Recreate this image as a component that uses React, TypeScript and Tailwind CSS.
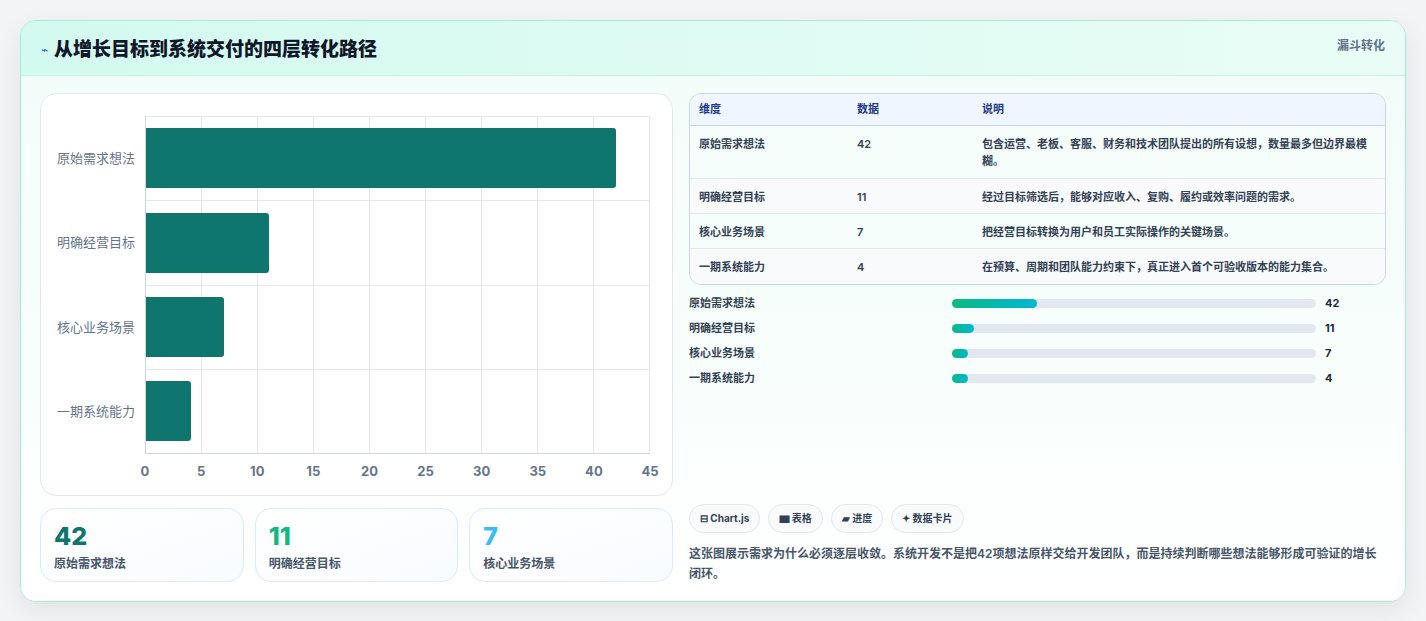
const rows = [
  { name: "原始需求想法", value: 42, desc: "包含运营、老板、客服、财务和技术团队提出的所有设想，数量最多但边界最模糊。", bar: "23.3%" },
  { name: "明确经营目标", value: 11, desc: "经过目标筛选后，能够对应收入、复购、履约或效率问题的需求。", bar: "6.1%" },
  { name: "核心业务场景", value: 7, desc: "把经营目标转换为用户和员工实际操作的关键场景。", bar: "4.4%" },
  { name: "一期系统能力", value: 4, desc: "在预算、周期和团队能力约束下，真正进入首个可验收版本的能力集合。", bar: "4.4%" },
];

const ticks = [0, 5, 10, 15, 20, 25, 30, 35, 40, 45];

function BarChart() {
  return (
    <div className="h-[403px] rounded-2xl border border-[#e2e8f0] bg-white pl-[14px] pr-[22px] pt-[22px]">
      <div className="flex">
        <div className="flex w-[90px] flex-col">
          {rows.map((r) => (
            <div key={r.name} className="flex h-[84.5px] items-center justify-end pr-[10px] text-[13px] text-[#64748b]">
              {r.name}
            </div>
          ))}
        </div>
        <div className="relative h-[338px] flex-1 border-b border-l border-[#cbd5e1]">
          <div className="absolute inset-0 flex">
            {ticks.slice(1).map((t) => (
              <div key={t} className="flex-1 border-r border-t border-[#e5e7eb]" />
            ))}
          </div>
          <div className="absolute inset-0 flex flex-col">
            {rows.map((r, i) => (
              <div key={r.name} className={`flex h-[84.5px] items-center ${i > 0 ? "border-t border-[#e5e7eb]" : ""}`}>
                <div className="h-[60px] rounded-r-[3px] bg-[#0f766e]" style={{ width: `${(r.value / 45) * 100}%` }} />
              </div>
            ))}
          </div>
        </div>
      </div>
      <div className="relative ml-[90px] mt-[8px] h-[20px]">
        {ticks.map((t) => (
          <span
            key={t}
            className="absolute -translate-x-1/2 text-[13px] font-bold text-[#64748b]"
            style={{ left: `${(t / 45) * 100}%` }}
          >
            {t}
          </span>
        ))}
      </div>
    </div>
  );
}

function StatCard({ value, label, color }: { value: string; label: string; color: string }) {
  return (
    <div className="flex-1 rounded-2xl border border-[#dbeafe] bg-gradient-to-br from-white to-[#f8fbff] px-[13px] pt-[12px] pb-[12px]">
      <div className={`text-[25px] font-extrabold leading-[30px] ${color}`}>{value}</div>
      <div className="mt-[4px] text-[12px] font-semibold text-[#475569]">{label}</div>
    </div>
  );
}

export default function App() {
  return (
    <div className="min-h-[621px] bg-[#f3f4f6] p-[20px] pb-[22px] font-['Inter','Noto_Sans_CJK_SC',sans-serif]" style={{ fontFamily: "Inter, 'Noto Sans CJK SC', sans-serif" }}>
      <div className="overflow-hidden rounded-2xl border border-[#a7ecd9] bg-white shadow-[0_8px_24px_rgba(15,23,42,0.08)]">
        <div className="flex h-[55px] items-start justify-between border-b border-[#c9f0e4] bg-gradient-to-r from-[#d3faf0] to-[#e9fdf6] px-[20px]">
          <div className="mt-[15px] flex items-center gap-[6px]">
            <span className="text-[12px] text-[#2563eb]">⌁</span>
            <h1 className="text-[19px] font-extrabold text-[#0f172a]">从增长目标到系统交付的四层转化路径</h1>
          </div>
          <div className="mt-[16px] text-[12px] font-bold text-[#64748b]">漏斗转化</div>
        </div>
        <div className="flex gap-[16px] bg-gradient-to-b from-[#f2fdf9] via-[#f7fefb] to-white px-[19px] pt-[17px] pb-[17px]">
          <div className="flex w-[633px] flex-col gap-[12px]">
            <BarChart />
            <div className="flex h-[74px] gap-[11px]">
              <StatCard value="42" label="原始需求想法" color="text-[#0f766e]" />
              <StatCard value="11" label="明确经营目标" color="text-[#10b981]" />
              <StatCard value="7" label="核心业务场景" color="text-[#38bdf8]" />
            </div>
          </div>
          <div className="flex flex-1 flex-col">
            <div className="overflow-hidden rounded-xl border border-[#cbd5e1] text-[11px] font-semibold text-[#334155]">
              <div className="flex h-[32px] items-center border-b border-[#cbd5e1] bg-[#eff6ff] font-bold text-[#1e3a8a]">
                <div className="w-[167px] pl-[9px]">维度</div>
                <div className="w-[125px]">数据</div>
                <div className="flex-1">说明</div>
              </div>
              {rows.map((r, i) => (
                <div
                  key={r.name}
                  className={`flex items-start py-[10px] ${i === 0 ? "h-[53px]" : "h-[35px]"} ${i % 2 === 0 ? "bg-[#f6fefb]" : "bg-[#f8fafc]"} ${i < 3 ? "border-b border-[#e2e8f0]" : ""}`}
                >
                  <div className="w-[167px] pl-[9px]">{r.name}</div>
                  <div className="w-[125px]">{r.value}</div>
                  <div className="flex-1 pr-[10px] leading-[17px]">{r.desc}</div>
                </div>
              ))}
            </div>
            <div className="mt-[11px] flex flex-col gap-[10px]">
              {rows.map((r) => (
                <div key={r.name} className="flex h-[15px] items-center text-[11px] font-semibold text-[#334155]">
                  <div className="w-[263px]">{r.name}</div>
                  <div className="h-[9px] w-[364px] rounded-full bg-[#e2e8f0]">
                    <div className="h-[9px] rounded-full bg-gradient-to-r from-[#10b981] to-[#06b6d4]" style={{ width: r.bar }} />
                  </div>
                  <div className="ml-[9px] font-bold text-[#1e293b]">{r.value}</div>
                </div>
              ))}
            </div>
            <div className="mt-[118px] flex gap-[8px]">
              {["⊟ Chart.js", "▆ 表格", "▰ 进度", "✦ 数据卡片"].map((c) => (
                <span key={c} className="rounded-full border border-[#e2e8f0] bg-[#f8fafc] px-[10px] py-[6px] text-[10px] font-bold text-[#334155]">
                  {c}
                </span>
              ))}
            </div>
            <p className="mt-[11px] text-[12px] font-semibold leading-[20px] text-[#475569]">
              这张图展示需求为什么必须逐层收敛。系统开发不是把42项想法原样交给开发团队，而是持续判断哪些想法能够形成可验证的增长闭环。
            </p>
          </div>
        </div>
      </div>
    </div>
  );
}
